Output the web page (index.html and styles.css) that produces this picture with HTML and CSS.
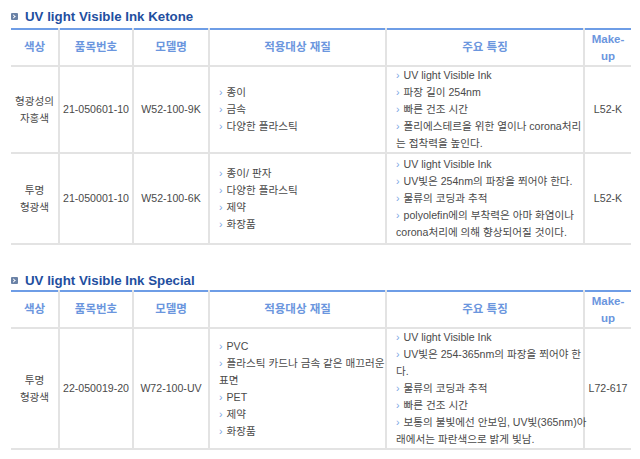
FILE: index.html
```html
<!DOCTYPE html>
<html lang="ko">
<head>
<meta charset="utf-8">
<link rel="stylesheet" href="styles.css">
</head>
<body>
<section class="sec">
  <h2 class="title"><span class="ico"></span>UV light Visible Ink Ketone</h2>
  <table class="spec">
    <colgroup><col class="c1"><col class="c2"><col class="c3"><col class="c4"><col class="c5"><col class="c6"></colgroup>
    <thead>
      <tr><th>색상</th><th>품목번호</th><th>모델명</th><th>적용대상 재질</th><th>주요 특징</th><th>Make-<br>up</th></tr>
    </thead>
    <tbody>
      <tr>
        <td class="ctr">형광성의<br>자홍색</td>
        <td class="ctr">21-050601-10</td>
        <td class="ctr">W52-100-9K</td>
        <td><ul><li>종이</li><li>금속</li><li>다양한 플라스틱</li></ul></td>
        <td><ul><li>UV light Visible Ink</li><li>파장 길이 254nm</li><li>빠른 건조 시간</li><li>폴리에스테르을 위한 열이나 corona처리<br>는 접착력을 높인다.</li></ul></td>
        <td class="ctr">L52-K</td>
      </tr>
      <tr class="roomy">
        <td class="ctr">투명<br>형광색</td>
        <td class="ctr">21-050001-10</td>
        <td class="ctr">W52-100-6K</td>
        <td><ul><li>종이/ 판자</li><li>다양한 플라스틱</li><li>제약</li><li>화장품</li></ul></td>
        <td><ul><li>UV light Visible Ink</li><li>UV빛은 254nm의 파장을 쬐어야 한다.</li><li>물류의 코딩과 추적</li><li>polyolefin에의 부착력은 아마 화염이나<br>corona처리에 의해 향상되어질 것이다.</li></ul></td>
        <td class="ctr">L52-K</td>
      </tr>
    </tbody>
  </table>
</section>
<section class="sec sec2">
  <h2 class="title"><span class="ico"></span>UV light Visible Ink Special</h2>
  <table class="spec">
    <colgroup><col class="c1"><col class="c2"><col class="c3"><col class="c4"><col class="c5"><col class="c6"></colgroup>
    <thead>
      <tr><th>색상</th><th>품목번호</th><th>모델명</th><th>적용대상 재질</th><th>주요 특징</th><th>Make-<br>up</th></tr>
    </thead>
    <tbody>
      <tr>
        <td class="ctr">투명<br>형광색</td>
        <td class="ctr">22-050019-20</td>
        <td class="ctr">W72-100-UV</td>
        <td><ul><li>PVC</li><li>플라스틱 카드나 금속 같은 매끄러운<br>표면</li><li>PET</li><li>제약</li><li>화장품</li></ul></td>
        <td><ul><li>UV light Visible Ink</li><li>UV빛은 254-365nm의 파장을 쬐어야 한<br>다.</li><li>물류의 코딩과 추적</li><li>빠른 건조 시간</li><li>보통의 불빛에선 안보임, UV빛(365nm)아<br>래에서는 파란색으로 밝게 빛남.</li></ul></td>
        <td class="ctr">L72-617</td>
      </tr>
    </tbody>
  </table>
</section>
</body>
</html>
```
FILE: styles.css
```css
html, body {
  margin: 0;
  padding: 0;
  background: #fff;
}
body {
  padding: 8px 9px 0 11px;
  font-family: "Liberation Sans", "Noto Sans CJK KR", sans-serif;
  font-size: 11px;
  color: #4a4a4a;
}
.sec2 {
  margin-top: 27px;
}
.title {
  display: flex;
  align-items: center;
  margin: 0 0 4px 0;
  height: 16px;
  font-size: 13.3px;
  font-weight: bold;
  color: #1f4f9f;
}
.sec2 .title {
  margin-bottom: 2px;
}
.ico {
  width: 7px;
  height: 7px;
  border-radius: 1px;
  background: #6a82a6;
  margin-right: 7px;
  position: relative;
}
.ico::after {
  content: "";
  position: absolute;
  left: 1px;
  top: 2px;
  width: 2px;
  height: 2px;
  border-top: 1px solid #fff;
  border-right: 1px solid #fff;
  transform: rotate(45deg);
}
.spec {
  width: 620px;
  border-collapse: collapse;
  table-layout: fixed;
  border-top: 2px solid #6e9de6;
}
.c1 { width: 48px; }
.c2 { width: 74px; }
.c3 { width: 76px; }
.c4 { width: 177px; }
.c5 { width: 198px; }
.c6 { width: 47px; }
.spec th {
  height: 35px;
  padding: 0;
  font-size: 11.5px;
  font-weight: bold;
  color: #6b96de;
  line-height: 17px;
  border-bottom: 2px solid #e3e3e3;
  border-left: 2px solid #e3e3e3;
}
.spec th:first-child, .spec td:first-child {
  border-left: none;
}
.spec td {
  padding: 0;
  font-size: 10.6px;
  line-height: 17px;
  vertical-align: middle;
  border-bottom: 2px solid #e3e3e3;
  border-left: 2px solid #e3e3e3;
  white-space: nowrap;
}
.spec .roomy td {
  padding: 2px 0;
}
.spec td.ctr {
  text-align: center;
}
.spec ul {
  list-style: none;
  margin: 0;
  padding: 0 0 0 9px;
}
.spec li::before {
  content: "›";
  color: #7aa6e4;
  margin-right: 4px;
}
```
